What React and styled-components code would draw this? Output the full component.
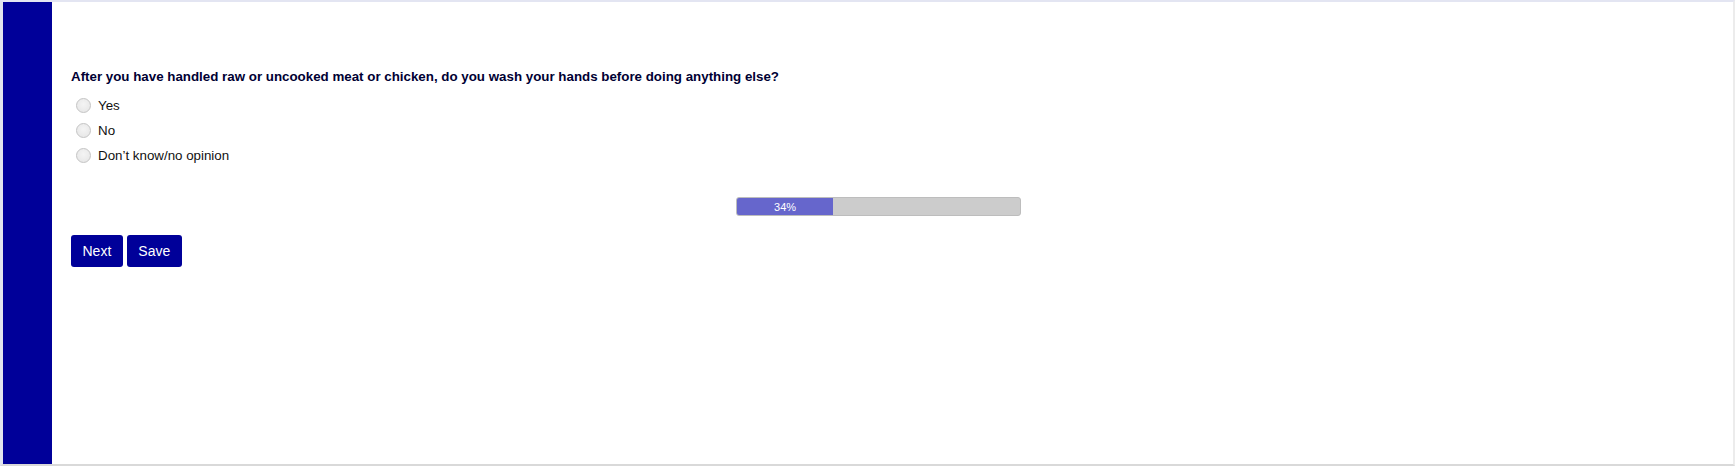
import React from "react";
import styled, { createGlobalStyle } from "styled-components";

const GlobalStyle = createGlobalStyle`
  body {
    margin: 0;
    background: #fff;
    font-family: "Liberation Sans", Arial, sans-serif;
  }
`;

const options = ["Yes", "No", "Don\u2019t know/no opinion"];

const App = () => {
  const progress = 34;
  return (
    <>
      <GlobalStyle />
      <Frame>
        <Sidebar />
        <Content>
          <Question>
            After you have handled raw or uncooked meat or chicken, do you wash your hands before doing anything else?
          </Question>
          <Options>
            {options.map((opt) => (
              <OptionRow key={opt}>
                <Radio type="radio" name="q1" />
                <span>{opt}</span>
              </OptionRow>
            ))}
          </Options>
          <ProgressWrap>
            <ProgressTrack>
              <ProgressFill style={{ width: `${progress}%` }}>{progress}%</ProgressFill>
            </ProgressTrack>
          </ProgressWrap>
          <Buttons>
            <Button>Next</Button>
            <Button>Save</Button>
          </Buttons>
        </Content>
      </Frame>
    </>
  );
};

const Frame = styled.div`
  box-sizing: border-box;
  width: 1735px;
  height: 466px;
  display: flex;
  border-top: 2px solid #e3e5f2;
  border-left: 3px solid #e1e4ee;
  border-bottom: 2px solid #d9d9d9;
  border-right: 2px solid #ececec;
`;

const Sidebar = styled.div`
  width: 49px;
  flex-shrink: 0;
  background: #000099;
`;

const Content = styled.main`
  flex: 1;
  padding: 67px 47px 0 19px;
  display: flex;
  flex-direction: column;
`;

const Question = styled.div`
  font-weight: 700;
  font-size: 13.33px;
  line-height: 16px;
  color: #000033;
`;

const Options = styled.div`
  margin-top: 8px;
  display: flex;
  flex-direction: column;
`;

const OptionRow = styled.label`
  height: 25px;
  display: flex;
  align-items: center;
  gap: 7px;
  font-size: 13.33px;
  color: #111;
  padding-left: 5px;
`;

const Radio = styled.input`
  appearance: none;
  margin: 0;
  width: 15px;
  height: 15px;
  border-radius: 50%;
  border: 1px solid #c4c4c4;
  background: radial-gradient(circle at 50% 40%, #f4f4f4 0%, #e4e4e4 100%);
  box-sizing: border-box;
`;

const ProgressWrap = styled.div`
  margin-top: 29px;
  display: flex;
  justify-content: center;
`;

const ProgressTrack = styled.div`
  box-sizing: border-box;
  width: 285px;
  height: 19px;
  background: #cccccc;
  border: 1px solid #bdbdbd;
  border-radius: 3px;
  overflow: hidden;
  display: flex;
`;

const ProgressFill = styled.div`
  background: #6666cc;
  color: #fff;
  font-size: 11px;
  display: flex;
  align-items: center;
  justify-content: center;
`;

const Buttons = styled.div`
  margin-top: 19px;
  display: flex;
  gap: 4px;
`;

const Button = styled.button`
  height: 32px;
  padding: 0 11.5px;
  border: none;
  border-radius: 3px;
  background: #000099;
  color: #fff;
  font: 400 14px "Liberation Sans", Arial, sans-serif;
  cursor: pointer;
`;

export default App;
